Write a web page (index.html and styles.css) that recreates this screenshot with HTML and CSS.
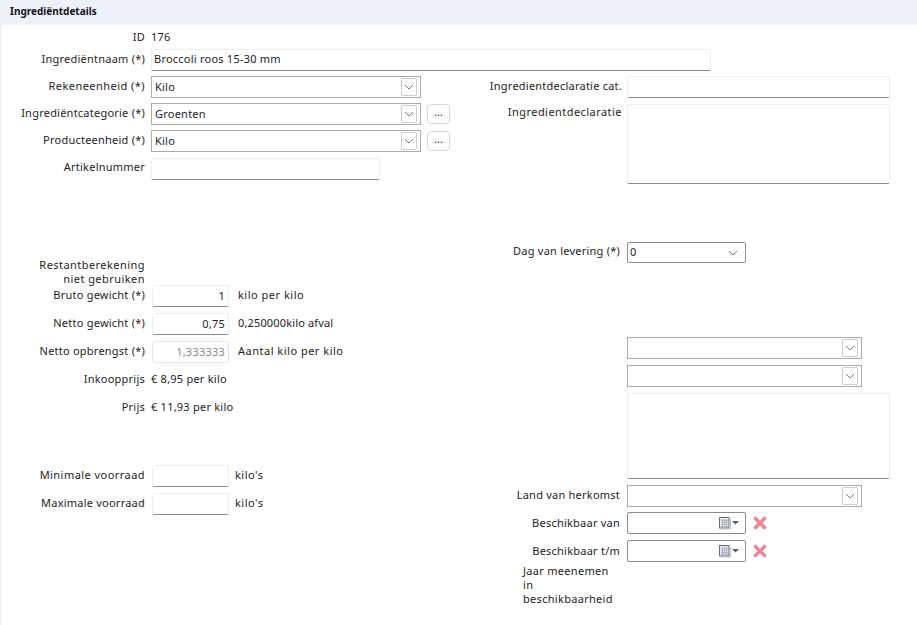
FILE: index.html
```html
<!DOCTYPE html>
<html lang="nl">
<head>
<meta charset="utf-8">
<title>Ingrediëntdetails</title>
<link rel="stylesheet" href="styles.css">
</head>
<body>
<svg class="defs" width="0" height="0" aria-hidden="true">
  <symbol id="chev" viewBox="0 0 10 6"><path d="M1 1l4 4 4-4" fill="none" stroke="#777" stroke-width="1"/></symbol>
  <symbol id="calendar" viewBox="0 0 21 13">
    <rect x="0.5" y="0.5" width="9.500" height="10.500" fill="#e4e7ee" stroke="#6f6f6f"/>
    <path d="M2 3.500h7M2 5.500h7M2 7.500h7M2 9.500h7M3.500 2v8M5.500 2v8M7.500 2v8" stroke="#a4adbf" stroke-width=".7"/>
    <path d="M1.500 12h10V2" fill="none" stroke="#c4c4c4"/>
    <path d="M13 4h7l-3.500 3.500z" fill="#4d5f82"/>
  </symbol>
</svg>
<main class="page">
  <h1 class="title">Ingrediëntdetails</h1>
  <div class="row row-id"><span class="label">ID</span><span class="value">176</span></div>
  <div class="row row-name"><label class="label">Ingrediëntnaam (*)</label><input class="input input-name" value="Broccoli roos 15-30 mm"></div>
  <div class="columns">
    <section class="col col-left">
      <div class="row"><label class="label wide">Rekeneenheid (*)</label>
        <div class="select select-wide"><span>Kilo</span><span class="arrow"><svg width="10" height="6"><use href="#chev"/></svg></span></div></div>
      <div class="row m5"><label class="label">Ingrediëntcategorie (*)</label>
        <div class="select select-wide"><span>Groenten</span><span class="arrow"><svg width="10" height="6"><use href="#chev"/></svg></span></div>
        <button class="dots">...</button></div>
      <div class="row m5"><label class="label">Producteenheid (*)</label>
        <div class="select select-wide"><span>Kilo</span><span class="arrow"><svg width="10" height="6"><use href="#chev"/></svg></span></div>
        <button class="dots">...</button></div>
      <div class="row m6"><label class="label label-art">Artikelnummer</label><input class="input input-art"></div>
      <div class="label label-block wide mrest">Restantberekening niet gebruiken</div>
      <div class="row"><label class="label">Bruto gewicht (*)</label><input class="input input-num" value="1"><span class="unit">kilo per kilo</span></div>
      <div class="row m6"><label class="label">Netto gewicht (*)</label><input class="input input-num" value="0,75"><span class="unit unit-tight">0,250000kilo afval</span></div>
      <div class="row m6"><label class="label">Netto opbrengst (*)</label><input class="input input-num input-off" value="1,333333" disabled><span class="unit">Aantal kilo per kilo</span></div>
      <div class="row m5"><span class="label">Inkoopprijs</span><span class="value">€ 8,95 per kilo</span></div>
      <div class="row m6"><span class="label">Prijs</span><span class="value">€ 11,93 per kilo</span></div>
      <div class="row mstock"><label class="label wide">Minimale voorraad</label><input class="input input-num"><span class="unit unit-s">kilo's</span></div>
      <div class="row m6"><label class="label">Maximale voorraad</label><input class="input input-num"><span class="unit unit-s">kilo's</span></div>
    </section>
    <section class="col col-right">
      <div class="row"><label class="label">Ingredientdeclaratie cat.</label><input class="input input-right"></div>
      <div class="row row-top m6"><label class="label wide">Ingredientdeclaratie</label><textarea class="input input-right area-a"></textarea></div>
      <div class="row mdag"><label class="label tight">Dag van levering (*)</label>
        <div class="select select-dag"><span>0</span><span class="arrow-plain"><svg width="10" height="6"><use href="#chev"/></svg></span></div></div>
      <div class="row mgroup"><span class="label"></span>
        <div class="select select-mid"><span></span><span class="arrow"><svg width="10" height="6"><use href="#chev"/></svg></span></div></div>
      <div class="row m6"><span class="label"></span>
        <div class="select select-mid"><span></span><span class="arrow"><svg width="10" height="6"><use href="#chev"/></svg></span></div></div>
      <div class="row row-top m6"><span class="label"></span><textarea class="input input-right area-b"></textarea></div>
      <div class="row m6"><label class="label tight">Land van herkomst</label>
        <div class="select select-mid"><span></span><span class="arrow"><svg width="10" height="6"><use href="#chev"/></svg></span></div></div>
      <div class="row m5"><span class="label tight">Beschikbaar van</span>
        <div class="date"><svg class="cal" width="21" height="13"><use href="#calendar"/></svg></div>
        <svg class="clear" width="14" height="14" viewBox="0 0 14 14"><path d="M2.500 2.500l9 9M11.500 2.500l-9 9" stroke="#e8899b" stroke-width="3.600" stroke-linecap="round"/></svg></div>
      <div class="row m6"><span class="label tight">Beschikbaar t/m</span>
        <div class="date"><svg class="cal" width="21" height="13"><use href="#calendar"/></svg></div>
        <svg class="clear" width="14" height="14" viewBox="0 0 14 14"><path d="M2.500 2.500l9 9M11.500 2.500l-9 9" stroke="#e8899b" stroke-width="3.600" stroke-linecap="round"/></svg></div>
      <div class="note">Jaar meenemen in beschikbaarheid</div>
    </section>
  </div>
</main>
</body>
</html>
```

FILE: styles.css
```css
* { box-sizing: border-box; }
html, body { margin: 0; height: 100%; background: #fff; }
body { overflow: hidden; }
.defs { position: absolute; }
.page {
  min-height: 625px;
  border-left: 1px solid #eeeeee;
  font: 11px/14px "Noto Sans", sans-serif;
  letter-spacing: 0.23px;
  color: #1d1d24;
}
.title {
  margin: 0 0 2px -1px;
  height: 25px;
  padding-left: 10px;
  background: #edf1fa;
  font: 700 10px/23px "Noto Sans", sans-serif;
  letter-spacing: 0;
  color: #14141c;
}
.row { display: flex; align-items: center; height: 22px; }
.row-top { align-items: flex-start; height: auto; }
.row-id { height: 20px; }
.row-name { margin: 2px 0 5px; }
.columns { display: flex; }
.col { display: flex; flex-direction: column; }
.col-left { width: 478px; }
.col-right { flex: 1; }
.label { flex: 0 0 145px; padding-right: 1px; text-align: right; margin-right: 5px; }
label.label { padding-bottom: 2px; }
label.label-art { padding-bottom: 4px; }
.wide { letter-spacing: 0.45px; }
.col-right .label { flex-basis: 143px; padding-right: 0; }
.col-right .label.tight { padding-right: 2px; }
.row-top .label { padding-top: 1px; }
.label-block { flex: none; width: 145px; height: 27px; padding-left: 30px; }
.m5 { margin-top: 5px; }
.m6 { margin-top: 6px; }
.mrest { margin-top: 78px; }
.mstock { margin-top: 47px; }
.mdag { margin-top: 57px; }
.mgroup { margin-top: 74px; }
.input {
  display: block;
  height: 22px;
  padding: 0 3px 2px 2px;
  border: 1px solid #eeeeee;
  border-bottom-color: #8a8a8a;
  border-radius: 2px;
  background: #fff;
  font: inherit;
  letter-spacing: inherit;
  color: inherit;
  outline: none;
  resize: none;
}
.input-name { width: 560px; padding-bottom: 4px; }
.input-art { width: 229px; }
.input-num { width: 77px; margin-left: 1px; text-align: right; }
.input-off { border-color: #e6e6e6; color: #8a8a8a; background: #fff; }
.input-right { width: 263px; }
.area-a { height: 80px; }
.area-b { height: 86px; }
.unit { margin-left: 9px; padding-bottom: 2px; letter-spacing: 0.5px; }
.unit-tight { letter-spacing: 0.15px; }
.unit-s { margin-left: 6px; }
.select {
  display: flex;
  align-items: center;
  justify-content: space-between;
  height: 22px;
  padding: 0 3px;
  border: 1px solid #ababab;
  background: #fff;
}
.select-wide { width: 270px; }
.select-mid { width: 235px; }
.select-dag { width: 119px; padding-left: 2px; padding-bottom: 1px; border-color: #8c8c8c; border-radius: 2px; height: 21px; }
.arrow {
  display: flex;
  align-items: center;
  justify-content: center;
  width: 16px;
  height: 18px;
  border: 1px solid #cccccc;
  border-radius: 2px;
}
.arrow-plain { display: flex; margin-right: 4px; padding-top: 3px; }
.dots {
  width: 23px;
  height: 20px;
  margin-left: 6px;
  padding: 0 0 4px;
  border: 1px solid #d6d6d6;
  border-radius: 4px;
  background: #fff;
  font: inherit;
  color: inherit;
}
.date {
  display: flex;
  align-items: center;
  justify-content: flex-end;
  width: 119px;
  height: 22px;
  padding-right: 5px;
  border: 1px solid #8c8c8c;
  border-radius: 2px;
  background: #fff;
}
.cal { display: block; }
.clear { display: block; margin-left: 7px; }
.note { width: 94px; margin: 2px 0 0 44px; letter-spacing: 0.3px; }
```
